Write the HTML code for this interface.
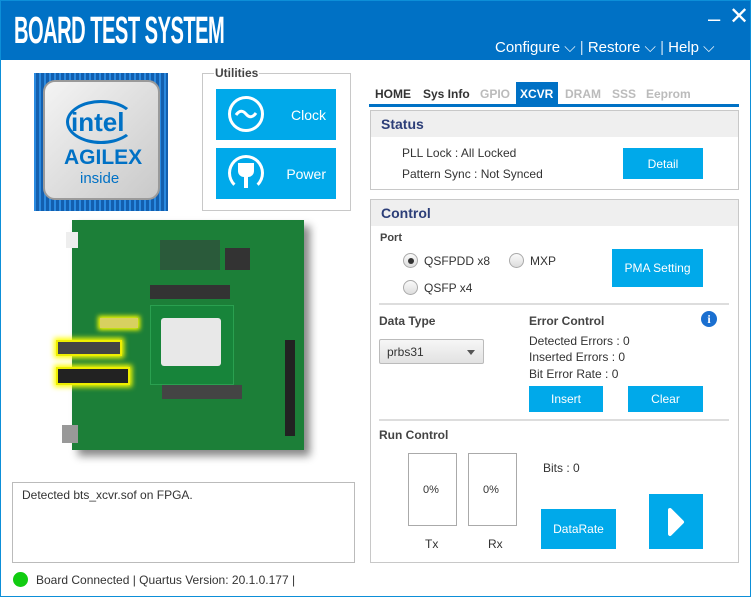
<!DOCTYPE html><html><head><meta charset="utf-8"><style>
*{box-sizing:border-box;margin:0;padding:0}
body{width:751px;height:597px;background:#fff;font-family:"Liberation Sans",sans-serif;position:relative;overflow:hidden;font-size:12px;color:#333}
.a{position:absolute}
.win{left:0;top:0;width:751px;height:597px;border:1px solid #0d8fd8}
.hdr{left:0;top:0;width:751px;height:60px;background:#0071c5}
.btn{position:absolute;background:#00a9ea;color:#fff;display:flex;align-items:center;justify-content:center;font-size:12px}
.panel{position:absolute;border:1px solid #c8c8c8;background:#fff}
.ph{position:absolute;left:0;top:0;right:0;height:26px;background:#efefef;color:#2c3e78;font-size:14px;font-weight:bold;padding:5px 10px}
.lbl{position:absolute;font-size:12px;font-weight:bold;color:#444}
.t{position:absolute;font-size:12px;color:#333;white-space:nowrap}
.radio{position:absolute;width:15px;height:15px;border-radius:50%;border:1px solid #aaa;background:linear-gradient(#fafafa,#ddd)}
.sep{position:absolute;left:379px;width:350px;height:2px;background:#ddd}
.tab{position:absolute;top:87px;font-size:12px;font-weight:bold}
</style></head><body>
<div class="a hdr"></div>
<div class="a" style="left:14px;top:10px;color:#fff;font-size:38px;font-weight:bold;letter-spacing:-1px;transform:scaleX(0.53);transform-origin:left;white-space:nowrap">BOARD TEST SYSTEM</div>
<div class="a" style="left:708px;top:6px;color:#fff;font-size:22px">– </div>
<div class="a" style="left:729px;top:2px;color:#fff;font-size:24px;font-weight:300">✕</div>
<div class="a" style="left:495px;top:39px;color:#fff;font-size:15px;white-space:nowrap">Configure ⌵ <span style="opacity:.8">|</span> Restore ⌵ <span style="opacity:.8">|</span> Help ⌵</div>
<div class="a win"></div>
<!-- intel logo -->
<div class="a" style="left:34px;top:73px;width:134px;height:138px;background:#1a72c4;background-image:repeating-linear-gradient(90deg,#2a8ae0 0 2px,#135fae 2px 5px)"></div>
<div class="a" style="left:43px;top:80px;width:117px;height:120px;border-radius:12px;background:linear-gradient(135deg,#f4f4f4,#c9c9c9);border:2px solid #9a9a9a"></div>
<div class="a" style="left:66px;top:100px;width:70px;height:44px;border:3px solid #0071c5;border-radius:50%;border-right-color:transparent;border-top-color:#0071c5"></div>
<div class="a" style="left:71px;top:107px;color:#0071c5;font-size:26px;font-weight:bold">intel</div>
<div class="a" style="left:64px;top:146px;color:#0071c5;font-size:21px;font-weight:bold">AGILEX</div>
<div class="a" style="left:80px;top:170px;color:#0071c5;font-size:15px">inside</div>
<!-- utilities -->
<div class="a" style="left:202px;top:73px;width:149px;height:138px;border:1px solid #c8c8c8"></div>
<div class="a" style="left:214px;top:66px;background:#fff;padding:0 1px;font-weight:bold;font-size:12px;color:#444">Utilities</div>
<div class="btn" style="left:216px;top:89px;width:120px;height:51px;justify-content:flex-end;padding-right:10px;font-size:14px">Clock</div>
<div class="a" style="left:228px;top:96px;width:36px;height:36px;border:3px solid #fff;border-radius:50%"></div>
<svg class="a" style="left:234px;top:108px" width="24" height="12"><path d="M2 7 Q7 0 12 6 T22 5" stroke="#fff" stroke-width="3" fill="none"/></svg>
<div class="btn" style="left:216px;top:148px;width:120px;height:51px;justify-content:flex-end;padding-right:10px;font-size:14px">Power</div>
<div class="a" style="left:228px;top:155px;width:36px;height:36px;border:3px solid #fff;border-radius:50%;border-bottom-color:transparent"></div>
<div class="a" style="left:238px;top:163px;width:16px;height:14px;background:#fff;border-radius:0 0 6px 6px"></div>
<div class="a" style="left:244px;top:176px;width:4px;height:12px;background:#fff"></div>
<!-- board -->
<div class="a" style="left:72px;top:220px;width:232px;height:230px;background:#1c7f38;box-shadow:6px 6px 8px #888"></div>
<div class="a" style="left:150px;top:305px;width:84px;height:80px;background:#17843a;border:1px solid #2aa050"></div>
<div class="a" style="left:161px;top:318px;width:60px;height:48px;background:#e8e8e8;border-radius:3px"></div>
<div class="a" style="left:100px;top:318px;width:38px;height:10px;background:#d8d060;box-shadow:0 0 5px 2px #ff0"></div>
<div class="a" style="left:56px;top:340px;width:66px;height:16px;background:#444;box-shadow:0 0 5px 2px #ff0;border:2px solid #ee0"></div>
<div class="a" style="left:56px;top:367px;width:74px;height:18px;background:#222;box-shadow:0 0 5px 2px #ff0;border:2px solid #ee0"></div>
<div class="a" style="left:162px;top:385px;width:80px;height:14px;background:#444"></div>
<div class="a" style="left:285px;top:340px;width:10px;height:96px;background:#222"></div>
<div class="a" style="left:225px;top:248px;width:25px;height:22px;background:#333"></div>
<div class="a" style="left:150px;top:285px;width:80px;height:14px;background:#333"></div>
<div class="a" style="left:160px;top:240px;width:60px;height:30px;background:#2a5a3a"></div>
<div class="a" style="left:66px;top:232px;width:12px;height:16px;background:#eee"></div>
<div class="a" style="left:62px;top:425px;width:16px;height:18px;background:#999"></div>
<!-- log -->
<div class="a" style="left:12px;top:482px;width:343px;height:81px;border:1px solid #bbb"></div>
<div class="t" style="left:22px;top:488px">Detected bts_xcvr.sof on FPGA.</div>
<div class="a" style="left:13px;top:572px;width:15px;height:15px;border-radius:50%;background:#11cc11"></div>
<div class="t" style="left:36px;top:573px">Board Connected | Quartus Version: 20.1.0.177 |</div>
<!-- tabs -->
<div class="tab" style="left:375px;color:#333">HOME</div>
<div class="tab" style="left:423px;color:#333">Sys Info</div>
<div class="tab" style="left:480px;color:#bbb">GPIO</div>
<div class="a" style="left:516px;top:82px;width:42px;height:23px;background:#0071c5"></div>
<div class="tab" style="left:520px;color:#fff">XCVR</div>
<div class="tab" style="left:565px;color:#bbb">DRAM</div>
<div class="tab" style="left:612px;color:#bbb">SSS</div>
<div class="tab" style="left:646px;color:#bbb">Eeprom</div>
<div class="a" style="left:369px;top:104px;width:370px;height:3px;background:#0071c5"></div>
<!-- status -->
<div class="panel" style="left:370px;top:110px;width:369px;height:80px"><div class="ph">Status</div></div>
<div class="t" style="left:402px;top:146px">PLL Lock : All Locked</div>
<div class="t" style="left:402px;top:167px">Pattern Sync : Not Synced</div>
<div class="btn" style="left:623px;top:148px;width:80px;height:31px">Detail</div>
<!-- control -->
<div class="panel" style="left:370px;top:199px;width:369px;height:364px"><div class="ph">Control</div></div>
<div class="lbl" style="left:380px;top:232px;font-size:11px">Port</div>
<div class="radio" style="left:403px;top:253px"></div><div class="a" style="left:408px;top:258px;width:6px;height:6px;border-radius:50%;background:#333"></div>
<div class="t" style="left:424px;top:254px">QSFPDD x8</div>
<div class="radio" style="left:509px;top:253px"></div><div class="t" style="left:530px;top:254px">MXP</div>
<div class="radio" style="left:403px;top:280px"></div><div class="t" style="left:424px;top:281px">QSFP x4</div>
<div class="btn" style="left:612px;top:249px;width:91px;height:38px">PMA Setting</div>
<div class="sep" style="top:303px"></div>
<div class="lbl" style="left:379px;top:314px">Data Type</div>
<div class="a" style="left:379px;top:339px;width:105px;height:25px;border:1px solid #bbb;border-radius:2px;background:linear-gradient(#f6f6f6,#e2e2e2)"></div>
<div class="t" style="left:387px;top:345px">prbs31</div>
<div class="a" style="left:467px;top:350px;border:4px solid transparent;border-top:5px solid #555"></div>
<div class="lbl" style="left:529px;top:314px">Error Control</div>
<div class="a" style="left:701px;top:311px;width:16px;height:16px;border-radius:50%;background:#1a6fd0;color:#fff;font-size:12px;font-weight:bold;text-align:center;line-height:16px;font-family:'Liberation Serif',serif">i</div>
<div class="t" style="left:529px;top:334px">Detected Errors : 0</div>
<div class="t" style="left:529px;top:350px">Inserted Errors : 0</div>
<div class="t" style="left:529px;top:367px">Bit Error Rate : 0</div>
<div class="btn" style="left:529px;top:386px;width:74px;height:26px">Insert</div>
<div class="btn" style="left:628px;top:386px;width:75px;height:26px">Clear</div>
<div class="sep" style="top:419px"></div>
<div class="lbl" style="left:379px;top:428px">Run Control</div>
<div class="a" style="left:408px;top:453px;width:49px;height:73px;border:1px solid #aaa"></div>
<div class="a" style="left:468px;top:453px;width:49px;height:73px;border:1px solid #aaa"></div>
<div class="t" style="left:423px;top:484px;font-size:11px">0%</div>
<div class="t" style="left:483px;top:484px;font-size:11px">0%</div>
<div class="t" style="left:425px;top:537px">Tx</div>
<div class="t" style="left:488px;top:537px">Rx</div>
<div class="t" style="left:543px;top:461px">Bits : 0</div>
<div class="btn" style="left:541px;top:509px;width:75px;height:40px">DataRate</div>
<div class="btn" style="left:649px;top:494px;width:54px;height:55px"><svg width="20" height="32"><path d="M4 4 L16 16 L4 28 Z" fill="#fff" stroke="#fff" stroke-width="4" stroke-linejoin="round"/></svg></div>
</body></html>
